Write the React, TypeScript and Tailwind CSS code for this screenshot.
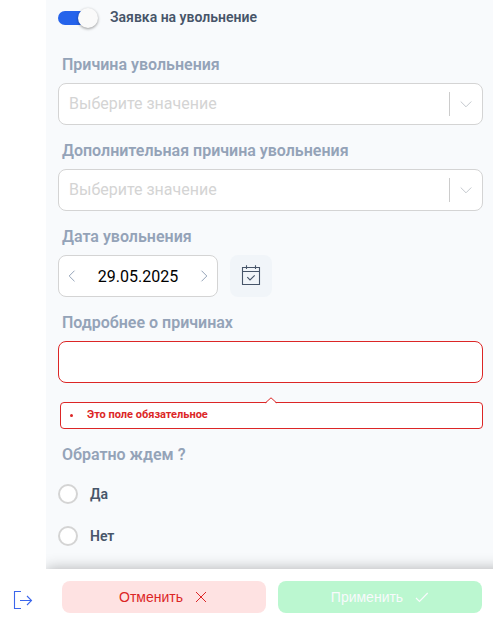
import type { ReactNode } from "react";

function Label({ children }: { children: ReactNode }) {
  return <p className="pl-1 text-base leading-6 font-semibold text-[#94a3b8] whitespace-nowrap">{children}</p>;
}

function SelectField({ label }: { label: string }) {
  return (
    <div className="mb-3.5">
      <Label>{label}</Label>
      <div className="mt-1.5 flex h-[42px] items-center rounded-lg border border-[#d4d4d4] bg-white pl-2.5">
        <span className="flex-1 text-base text-[#d4d4d4]">Выберите значение</span>
        <span className="h-6 w-px bg-[#cccccc]" />
        <svg className="ml-2.5 mr-2.5 h-3 w-3" viewBox="0 0 12 12" fill="none" stroke="#c4c8ce">
          <path d="M0.7 3.5L6 8.8L11.3 3.5" />
        </svg>
      </div>
    </div>
  );
}

function RadioOption({ text }: { text: string }) {
  return (
    <label className="flex h-5 items-center gap-3">
      <span className="h-5 w-5 rounded-full border-2 border-[#d4d4d4] bg-white" />
      <span className="text-sm font-semibold text-[#475569]">{text}</span>
    </label>
  );
}

export default function App() {
  return (
    <div className="flex h-[617px] w-[493px] overflow-hidden bg-white font-['Roboto',sans-serif]">
      <aside className="flex w-[46px] shrink-0 flex-col justify-end pb-[7px] pl-[13px]">
        <svg className="h-5 w-5" viewBox="0 0 20 20" fill="none" stroke="#3b66ec" strokeWidth="1.1">
          <path d="M8 1.5H1.5V18.5H8M7 10.5H18.5M14 6L18.5 10.5L14 15" />
        </svg>
      </aside>

      <main className="flex min-w-0 flex-1 flex-col overflow-hidden">
        <div className="h-[569px] bg-[#f8fafc] pl-3 pr-2.5 pt-2">
          <div className="flex h-5 items-center">
            <div className="flex h-3.5 w-9 items-center rounded-full bg-[#2563eb]">
              <span className="ml-5 h-5 w-5 shrink-0 rounded-full bg-[#fafafa] shadow-[0_1px_3px_rgba(0,0,0,0.4)]" />
            </div>
            <span className="-mt-0.5 ml-4 text-sm font-semibold text-[#475569]">Заявка на увольнение</span>
          </div>

          <div className="mt-[25px]">
            <SelectField label="Причина увольнения" />
            <SelectField label="Дополнительная причина увольнения" />

            <Label>Дата увольнения</Label>
            <div className="mt-1.5 flex gap-3">
              <div className="flex h-[42px] w-40 items-center justify-between rounded-lg border border-[#d4d4d4] bg-white px-[9px]">
                <svg className="h-3 w-2" viewBox="0 0 8 12" fill="none" stroke="#94a3b8">
                  <path d="M6.5 0.7L1.2 6L6.5 11.3" />
                </svg>
                <span className="pt-0.5 text-base text-black">29.05.2025</span>
                <svg className="h-3 w-2" viewBox="0 0 8 12" fill="none" stroke="#94a3b8">
                  <path d="M1.5 0.7L6.8 6L1.5 11.3" />
                </svg>
              </div>
              <button className="flex h-[42px] w-[42px] items-center justify-center rounded-lg bg-[#f1f5f9]">
                <svg className="h-5 w-5 overflow-visible" viewBox="0 0 20 20" fill="none" stroke="#475569" strokeWidth="1.1">
                  <path d="M1.5 1.5H18.5V18.5H1.5ZM1.5 5.5H18.5M5.5 -0.8V3M14.5 -0.8V3M6.3 11.2L9 14L13.7 9.3" />
                </svg>
              </button>
            </div>

            <div className="mt-3.5">
              <Label>Подробнее о причинах</Label>
              <div className="mt-1.5 h-[42px] rounded-lg border border-[#dc2626] bg-white" />
            </div>

            <div className="relative ml-0.5 mt-[19px] flex h-[27px] items-center rounded border border-[#dc2626] bg-white pl-[9px] text-[11px] font-bold text-[#dc2626]">
              <svg className="absolute left-[204px] -top-[6px] h-[7px] w-3" viewBox="0 0 12 7">
                <path d="M1 6L6 1L11 6V7H1Z" fill="white" />
                <path d="M0.5 5.8L6 0.8L11.5 5.8" fill="none" stroke="#dc2626" />
              </svg>
              <span className="-mt-px mr-3.5 h-[3px] w-[3px] rounded-full bg-[#dc2626]" />
              <span>Это поле обязательное</span>
            </div>

            <div className="mt-3.5">
              <Label>Обратно ждем ?</Label>
              <div className="mt-[17px] flex flex-col gap-[22px]">
                <RadioOption text="Да" />
                <RadioOption text="Нет" />
              </div>
            </div>
          </div>
        </div>

        <footer className="relative flex h-12 w-[467px] gap-3 bg-white pl-4 pt-3 font-['Liberation_Sans',sans-serif] text-sm shadow-[0_0_14px_rgba(0,0,0,0.3)]">
          <button className="flex h-8 w-[204px] items-center justify-center gap-3 rounded-lg bg-[#fee2e2] pr-0.5 text-[#dc2626]">
            Отменить
            <svg className="h-3 w-3" viewBox="0 0 12 12" fill="none" stroke="#dc2626">
              <path d="M1 1L11 11M11 1L1 11" />
            </svg>
          </button>
          <button className="flex h-8 w-[204px] items-center justify-center gap-3 rounded-lg bg-[#bbf7d0] text-[#f8fafc]">
            Применить
            <svg className="h-3 w-3.5" viewBox="0 0 14 12" fill="none" stroke="#f8fafc" strokeWidth="1.2">
              <path d="M1 7L4.5 10.5L12.7 2" />
            </svg>
          </button>
        </footer>
      </main>
    </div>
  );
}
